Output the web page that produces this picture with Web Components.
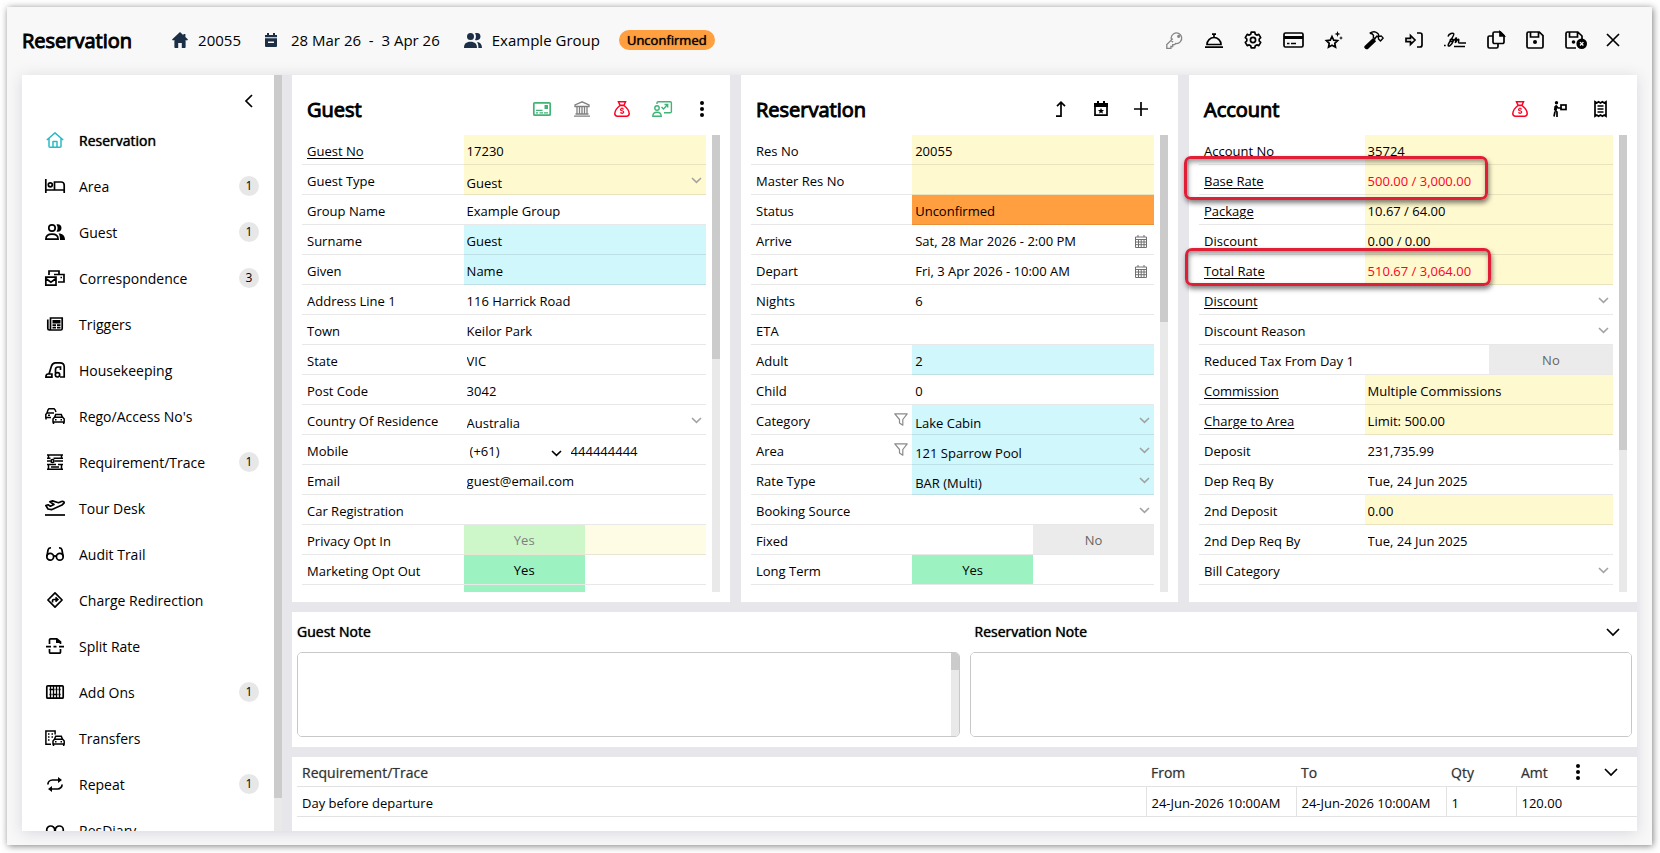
<!DOCTYPE html>
<html lang="en">
<head>
<meta charset="utf-8">
<title>Reservation</title>
<style>
  html, body {
    height: 100%;
  }

  body {
    margin: 0;
    padding: 7px 8px 8px 7px;
    box-sizing: border-box;
    background: #fff;
    color: #000;
    font-family: 'Open Sans', 'Noto Sans', sans-serif;
    font-size: 13px;
    overflow: hidden;
  }
</style>
</head>
<body>
<res-dialog>
  <res-header slot="header"></res-header>

  <side-nav slot="nav">
    <nav-item icon="home" active>Reservation</nav-item>
    <nav-item icon="bed" count="1">Area</nav-item>
    <nav-item icon="users" count="1">Guest</nav-item>
    <nav-item icon="mails" count="3">Correspondence</nav-item>
    <nav-item icon="news">Triggers</nav-item>
    <nav-item icon="vacuum">Housekeeping</nav-item>
    <nav-item icon="cars">Rego/Access No's</nav-item>
    <nav-item icon="trace" count="1">Requirement/Trace</nav-item>
    <nav-item icon="plane">Tour Desk</nav-item>
    <nav-item icon="glasses">Audit Trail</nav-item>
    <nav-item icon="redirect">Charge Redirection</nav-item>
    <nav-item icon="split">Split Rate</nav-item>
    <nav-item icon="abacus" count="1">Add Ons</nav-item>
    <nav-item icon="transfer">Transfers</nav-item>
    <nav-item icon="repeat" count="1">Repeat</nav-item>
    <nav-item icon="diary">ResDiary</nav-item>
  </side-nav>

  <data-panel heading="Guest" icons="license:green bank:grey moneybag:red teacher:green kebab" thumb="49%" class="wide-head">
    <field-row label="Guest No" value="17230" tone="yellow" link></field-row>
    <field-row label="Guest Type" value="Guest" type="select" tone="yellow"></field-row>
    <field-row label="Group Name" value="Example Group"></field-row>
    <field-row label="Surname" value="Guest" tone="cyan"></field-row>
    <field-row label="Given" value="Name" tone="cyan"></field-row>
    <field-row label="Address Line 1" value="116 Harrick Road"></field-row>
    <field-row label="Town" value="Keilor Park"></field-row>
    <field-row label="State" value="VIC"></field-row>
    <field-row label="Post Code" value="3042"></field-row>
    <field-row label="Country Of Residence" value="Australia" type="select"></field-row>
    <field-row label="Mobile" value="444444444" code="(+61)" type="phone"></field-row>
    <field-row label="Email" value="guest@email.com"></field-row>
    <field-row label="Car Registration" value=""></field-row>
    <field-row label="Privacy Opt In" value="Yes" type="toggle" disabled></field-row>
    <field-row label="Marketing Opt Out" value="Yes" type="toggle"></field-row>
    <field-row label="" value="" type="toggle"></field-row>
  </data-panel>

  <data-panel heading="Reservation" icons="turnup calstar plus" thumb="41%">
    <field-row label="Res No" value="20055" tone="yellow"></field-row>
    <field-row label="Master Res No" value="" tone="yellow"></field-row>
    <field-row label="Status" value="Unconfirmed" tone="orange"></field-row>
    <field-row label="Arrive" value="Sat, 28 Mar 2026 - 2:00 PM" type="date"></field-row>
    <field-row label="Depart" value="Fri, 3 Apr 2026 - 10:00 AM" type="date"></field-row>
    <field-row label="Nights" value="6"></field-row>
    <field-row label="ETA" value=""></field-row>
    <field-row label="Adult" value="2" tone="cyan"></field-row>
    <field-row label="Child" value="0"></field-row>
    <field-row label="Category" value="Lake Cabin" type="select" tone="cyan" filter></field-row>
    <field-row label="Area" value="121 Sparrow Pool" type="select" tone="cyan" filter></field-row>
    <field-row label="Rate Type" value="BAR (Multi)" type="select" tone="cyan"></field-row>
    <field-row label="Booking Source" value="" type="select"></field-row>
    <field-row label="Fixed" value="No" type="toggle"></field-row>
    <field-row label="Long Term" value="Yes" type="toggle"></field-row>
  </data-panel>

  <data-panel heading="Account" icons="moneybag:red carry receipt" thumb="69%">
    <field-row label="Account No" value="35724" tone="yellow"></field-row>
    <field-row label="Base Rate" value="500.00 / 3,000.00" tone="yellow" link alert></field-row>
    <field-row label="Package" value="10.67 / 64.00" tone="yellow" link></field-row>
    <field-row label="Discount" value="0.00 / 0.00" tone="yellow"></field-row>
    <field-row label="Total Rate" value="510.67 / 3,064.00" tone="yellow" link alert></field-row>
    <field-row label="Discount" value="" type="select" link></field-row>
    <field-row label="Discount Reason" value="" type="select"></field-row>
    <field-row label="Reduced Tax From Day 1" value="No" type="toggle"></field-row>
    <field-row label="Commission" value="Multiple Commissions" tone="yellow" link></field-row>
    <field-row label="Charge to Area" value="Limit: 500.00" tone="yellow" link></field-row>
    <field-row label="Deposit" value="231,735.99"></field-row>
    <field-row label="Dep Req By" value="Tue, 24 Jun 2025"></field-row>
    <field-row label="2nd Deposit" value="0.00" tone="yellow"></field-row>
    <field-row label="2nd Dep Req By" value="Tue, 24 Jun 2025"></field-row>
    <field-row label="Bill Category" value="" type="select"></field-row>
    <mark-box slot="marks" style="top: 81px; left: -5px; width: 304px; height: 44px"></mark-box>
    <mark-box slot="marks" style="top: 173px; left: -4px; width: 306px; height: 38px"></mark-box>
  </data-panel>

  <res-notes slot="notes"></res-notes>
  <trace-table slot="trace"></trace-table>
</res-dialog>

<script>
// name: [width, height, markup]
const ICONS = {
  homeSolid: [16, 16, '<path fill="currentColor" stroke="none" d="M8 0 0 7.4 1 8.6l1.4-.6v7.2c0 .5.3.8.8.8h3V11h3.600v5h3c.5 0 .8-.3.8-.8V8l1.400.6 1-1.200-2.600-2.400V2h-2v1.200z"/>'],
  calSolid: [12, 14, '<path fill="currentColor" stroke="none" fill-rule="evenodd" d="M2 0h2v2h4V0h2v2h2v2.300H0V2h2zM0 5.300h12V13a1 1 0 0 1-1 1H1a1 1 0 0 1-1-1zM3 8.500v1.600h6V8.500z"/>'],
  usersSolid: [18, 15, '<g fill="currentColor" stroke="none"><circle cx="6.500" cy="3.500" r="3.500"/><path d="M0 15c0-4 2-6.200 6.500-6.200S13 11 13 15zM11 .3c4-1.200 5.500 1 5.500 3.200S15 8 11 6.900c1.300-1.800 1.300-4.800 0-6.600zM13 8.900c3.400.3 5 2.600 5 6.100h-3.600c0-2.700-.2-4.500-1.400-6.100z"/></g>'],
  key: [18, 18, '<path stroke-width="1.300" d="M7 11.300A5.300 5.300 0 1 1 9.700 12.500L8.600 13.700H6.700v1.800H4.900v1.800H.8v-3.800L6.800 7.600"/><circle cx="12.700" cy="5.300" r=".8"/>'],
  bell: [18, 15, '<path d="M2 11.500a7 7 0 0 1 14 0zM0 14.200h18M7 1.200h4M9 1v3"/>'],
  gear: [18, 18, '<path stroke-linejoin="round" d="m7.200 1.200-.5 2-1.500.9-2-.7L1.300 6.600 2.800 8v2l-1.500 1.400 1.900 3.200 2-.7 1.500.9.500 2h3.600l.5-2 1.500-.9 2 .7 1.900-3.200L15.200 10V8l1.500-1.400-1.900-3.200-2 .7-1.500-.9-.5-2z"/><circle cx="9" cy="9" r="2.600"/>'],
  card: [21, 16, '<rect x="1" y="1" width="19" height="14" rx="1.500"/><path stroke-width="3" d="M1 5.500h19"/><path d="M4 11.500h2.500M8 11.500h5"/>'],
  star: [18, 18, '<path d="m7 5.500 1.700 3.600 3.900.5-2.800 2.700.7 3.900L7 14.300l-3.500 1.900.7-3.900-2.800-2.700 3.900-.5z"/><path fill="currentColor" stroke="none" d="m12.500 0 .8 2.200 2.200.8-2.200.8-.8 2.200-.8-2.200L9.500 3l2.200-.8zM16 5l.6 1.400 1.400.6-1.400.6L16 9l-.6-1.400L14 7l1.400-.6z"/>'],
  hammer: [20, 18, '<path fill="currentColor" d="m1.200 15.500 7.800-7.200 1.900 1.900-7.200 7C2.500 18 .5 16.800 1.200 15.500z"/><path stroke-width="1.400" stroke-linejoin="round" d="M5.800 2.300C8.800.2 11.500.5 13.500 2.300l1 1 .2 1.700 1.500.3 1-.4 2 2.200-2.700 2.800-2-2v-1.500L13 5l-2.800 3.300"/><path stroke-width="1.400" d="M5.800 2.300c1.800 0 3 .7 3.700 2l-.2 2 2 2.200"/>'],
  login: [18, 16, '<path d="M1 6.300h4.500V3.500L10 8l-4.500 4.500V9.700H1zM12 1h3a2 2 0 0 1 2 2v10a2 2 0 0 1-2 2h-3"/>'],
  sign: [22, 16, '<path stroke-width="1.500" d="M4 4.500c1-3 5-4 5.800-2.700C10.500 3.200 5 10 4.200 13c-.3 2.300 3.300 1 5.300-4.500C8.500 6 5 7.500 6.500 9.300 8.500 10.500 10.500 8 12.500 5.500l-1.200 5.500c2-4 3.700-4.500 3.500-3s-.8 3 .7 3H22M10 14.500h11M0 13.500h1.700"/>'],
  copy: [18, 18, '<path d="M7.500 1h6L17 4.500V11a1.500 1.500 0 0 1-1.500 1.500h-8A1.500 1.500 0 0 1 6 11V2.500A1.500 1.500 0 0 1 7.500 1z"/><path fill="currentColor" d="M13 1v4h4z"/><path d="M6 5H2.500A1.500 1.500 0 0 0 1 6.500v9A1.500 1.500 0 0 0 2.500 17h7a1.500 1.500 0 0 0 1.500-1.500v-3"/>'],
  save: [18, 18, '<path d="M2.500 1h10.800L17 4.700v10.800a1.500 1.500 0 0 1-1.500 1.500h-13A1.500 1.500 0 0 1 1 15.500v-13A1.500 1.500 0 0 1 2.500 1zM4.500 1v5h8V1"/><circle cx="9" cy="11" r="2" fill="currentColor" stroke="none"/>'],
  saveX: [22, 18, '<path d="M11 17H2.500A1.500 1.500 0 0 1 1 15.500v-13A1.500 1.500 0 0 1 2.500 1h10.300L17 5v3M4.500 1v5h8V1"/><circle cx="8.500" cy="11" r="1.800" fill="currentColor" stroke="none"/><circle cx="16.700" cy="12.800" r="5.300" fill="currentColor" stroke="none"/><path stroke="#fff" stroke-width="1.300" d="m15 11.100 3.400 3.400m0-3.400L15 14.500"/>'],
  close: [12, 12, '<path d="m0 0 12 12M12 0 0 12"/>'],
  license: [18, 14, '<rect x=".8" y=".8" width="16.400" height="12.400" rx="1"/><path d="M3 8.300h6.500M3 10.800h2M6.500 10.800h3.500M11 10.800h4" stroke-width="1.300"/><path fill="currentColor" stroke="none" d="M11.500 3H15v4h-3.500z"/>'],
  bank: [16, 16, '<path stroke-width="1.300" d="M8 .8 1 4v1.500h14V4zM0 15.200h16M1.500 13h13M3 6v6.500M5.500 6v6.500M8 6v6.500M10.500 6v6.500M13 6v6.500"/>'],
  moneybag: [16, 16, '<path stroke-width="1.500" d="M4.500.8h7L10 4.200H6zM6 4.500h4c2.500 2 5.200 5 5.200 8 0 2-1 2.700-2.700 2.700h-9c-1.700 0-2.700-.7-2.700-2.700 0-3 2.700-6 5.200-8z"/><path stroke-width="1.200" d="M9.700 8.200C8.500 7.300 6.500 7.400 6.500 8.700s3.200.8 3.200 2.200-2.200 1.500-3.400.6M8 6.500v1.200m0 4v1.200"/>'],
  teacher: [20, 16, '<g stroke-width="1.400"><path d="M5 3V2A1.200 1.200 0 0 1 6.200.8h12A1.200 1.200 0 0 1 19.400 2v8.500a1.200 1.200 0 0 1-1.200 1.200H12"/><circle cx="5" cy="7" r="2.200"/><path d="M.8 15.200c0-2.700 1.500-4 4.200-4s4.200 1.300 4.200 4zM9.500 6l2 2 4-4.300M12.500 3.500h3.200v3"/></g>'],
  kebab: [4, 16, '<g fill="currentColor" stroke="none"><circle cx="2" cy="2" r="2"/><circle cx="2" cy="8" r="2"/><circle cx="2" cy="14" r="2"/></g>'],
  turnup: [12, 16, '<path d="M1 15.200h5V1.500M2 5.200l4-4 4 4"/>'],
  calstar: [14, 16, '<path d="M1 3v11.200h12V3"/><path stroke="none" fill="currentColor" d="M0 2h3V0h2v2h4V0h2v2h3v4H0zM7 7l.9 1.900 2.100.2-1.600 1.400.5 2.100L7 11.500l-1.900 1.100.5-2.100L4 9.100l2.100-.2z"/>'],
  plus: [14, 14, '<path d="M7 0v14M0 7h14"/>'],
  carry: [14, 16, '<circle cx="3.500" cy="1.700" r="1.700" fill="currentColor" stroke="none"/><path d="M3 4.500 1.800 8.500 4 11v5M2 10.500 1 15.500M3 4.500 5 7h3.500"/><rect x="8" y="4" width="5" height="4.500"/><path stroke-width="2.500" d="M2.700 5v4"/>'],
  receipt: [13, 16, '<path d="M1 .8 2.800 2 4.600.8 6.500 2 8.400.8 10.200 2 12 .8v14.400L10.200 14l-1.800 1.200L6.500 14l-1.900 1.200L2.800 14 1 15.200z"/><path d="M3.500 5h6M3.500 8h6M3.500 11h6"/>'],
  calendar: [12, 13, '<path stroke-width="1" d="M.5 2h11v10.500H.5zM.5 4.500h11M.5 7h11M.5 9.700h11M3.500 4.500v8M6.200 4.500v8M9 4.500v8M3 0v2M9 0v2"/>'],
  filter: [14, 13, '<path stroke-width="1.200" stroke-linejoin="round" d="M.8.8h12.400L8.800 6.500v5.700L5.500 10V6.500z"/>'],
  down: [14, 8, '<path d="m1 1 6 6 6-6"/>'],
  chevron: [11, 6, '<path stroke-width="1.600" d="m1 1 4.500 4.300L10 1"/>'],
  left: [8, 14, '<path d="M7 1 1 7l6 6"/>'],
  home: [18, 16, '<path stroke-width="1.500" stroke-linejoin="round" d="M.8 8 9 .9 17.200 8M3 6.500v7.700a1 1 0 0 0 1 1h10a1 1 0 0 0 1-1V6.500M7 15V9.500h4V15"/>'],
  bed: [20, 14, '<path d="M.8 0v14M.8 11h18.400M19.200 14V6a3 3 0 0 0-3-3H9.500v8"/><circle cx="5.300" cy="5.800" r="2"/>'],
  users: [20, 16, '<circle cx="7" cy="4" r="3.200"/><path d="M.9 15.200c0-3.300 2-5 6.100-5s6.100 1.700 6.100 5z"/><path fill="currentColor" stroke="none" d="M11.500.5c2.800-.8 5 .8 5 3.500s-2.200 4.300-5 3.500c1.500-2 1.500-5 0-7zM13.500 9.600c4.500 0 6.500 2.600 6.500 6.400h-5c0-3-.3-4.700-1.500-6.400z"/>'],
  mails: [20, 16, '<path d="M4 5V1h10v3M9 4.500h10V12h-6M.8 7.200H11v8H.8zM.8 8.500l5.100 3.700L11 8.500M15.500 7.500H17"/>'],
  news: [16, 14, '<path d="M3.500 11.500V1h11.700v10.500a1.500 1.500 0 0 1-1.500 1.500H2.300A1.500 1.500 0 0 1 .8 11.500V2.500M3.500 11.500a1.500 1.500 0 0 1-1.200 1.500M5.500 8.200H9M5.500 10.700H9M10 8.200h3.500M10 10.700h3.500"/><path fill="currentColor" stroke="none" d="M5.500 3h8v3.500h-8z"/>'],
  vacuum: [20, 16, '<path d="M4 12 6.500 4c.8-2.300 2-3.200 4-3.200H15c2.700 0 4.200 1.500 4.200 4V15H15M.9 15.200h6V12H3c-1.300 0-2.100 1.300-2.100 3.200zM10.500 11V7.500C10.500 5.700 11.500 5 13 5h2.500v3"/><circle cx="12.500" cy="12.800" r="2.200"/>'],
  cars: [20, 16, '<path stroke-width="1.500" d="M6 9.500H.8V6.500L2 5l1-3.200.9-1h5.200l1 1L11 4M2 5h7M1 9.500v2M9.500 9.500l1.200-3h5.600l1.200 3M8 14v-3l1.500-1.700h8.200L19.200 11v3zM8.500 14v2M18.700 14v2M10 11.700h1.500M15.500 11.700H17M3 7.300h2"/>'],
  trace: [16, 16, '<path stroke-width="1.500" d="M0 1h16M1.500 1v3.500M14.500 1v3.500M0 4.300h3.500M6.500 4.300H16M0 7h3.500M8 7h8M0 10.500h9M11 10.500h5M1.500 10.500V15M14.500 10.500V15M0 15.200h16M4 13h8"/><circle cx="5.500" cy="7" r="1.500"/>'],
  plane: [20, 16, '<path stroke-linejoin="round" d="M3 9 .9 5.500l2.200-.7 2.300 1.400L9 4.500 4.800 1.800 7.500.9l6 1.800 3-1.200c2-.6 3 .6 2.500 1.700L17 5 6.500 9.700z"/><path d="M0 15h20"/>'],
  glasses: [18, 14, '<circle cx="4.200" cy="9.800" r="3.400"/><circle cx="13.800" cy="9.800" r="3.400"/><path d="M.9 9.500 2 3C2.400 1.300 3.300.8 5 1M17.100 9.500 16 3c-.4-1.700-1.300-2.200-3-2M7.500 9.500c1-.8 2-.8 3 0"/>'],
  redirect: [16, 16, '<path stroke-linejoin="round" d="m8 .9 7.100 7.100L8 15.100.9 8z"/><path d="M5.500 10.500V8.700C5.500 8 6 7.500 6.700 7.500h3.800M8.500 5.300l2.300 2.200-2.300 2.200"/>'],
  split: [18, 16, '<path d="M3.500 6V2A1.100 1.100 0 0 1 4.600.9h6.200L14.500 4v2M3.500 11v3a1.100 1.100 0 0 0 1.100 1.200h8.800a1.100 1.100 0 0 0 1.100-1.200v-3M0 8.700h5M7.500 8.700h3M13 8.700h5"/><path fill="currentColor" stroke="none" d="M10 0v5h5z"/>'],
  abacus: [18, 14, '<rect x=".8" y=".8" width="16.400" height="12.400" rx="1"/><path stroke-width="1.300" d="M4.500 1v12M7.500 1v12M10.500 1v12M13.500 1v12"/><path stroke-width="1.400" d="M3.500 4.500h5M9.500 4.500h2M3.500 9.500h2M6.500 9.500h5M12.500 4.500h2M12.500 9.500h2"/>'],
  transfer: [20, 16, '<path stroke-width="1.500" d="M6 14.200H.9V.9h9.200V4.500M3 4h1.500M6.500 4H8M3 7h1.500M6.500 7H8M3 10h1.500M9.500 9.300l1.200-3h5.600l1.200 3M8 14v-3l1.500-1.700h8.200L19.200 11v3zM8.500 14v2M18.700 14v2M10 11.700h1.500M15.500 11.700H17"/>'],
  repeat: [16, 15, '<path d="M.9 7.500A4.500 4.500 0 0 1 5.400 3H12M15.100 7.500A4.500 4.500 0 0 1 10.600 12H4"/><path fill="currentColor" stroke="none" d="M11 0v6l4-3zM5 9v6l-4-3z"/>'],
  diary: [18, 10, '<circle cx="4.700" cy="5" r="4"/><circle cx="13.300" cy="5" r="4"/>'],
};

const BUTTON_RESET = `
  button {
    display: inline-flex;
    align-items: center;
    justify-content: center;
    padding: 0;
    border: 0;
    background: none;
    color: inherit;
    font: inherit;
    cursor: pointer;
  }
`;

class UiIcon extends HTMLElement {
  constructor() {
    super();
    this.attachShadow({ mode: 'open' });
  }

  connectedCallback() {
    const [w, h, markup] = ICONS[this.getAttribute('name')];
    this.shadowRoot.innerHTML = `
      <style>
        :host { display: inline-flex; }
        svg { display: block; overflow: visible; }
      </style>
      <svg width="${w}" height="${h}" viewBox="0 0 ${w} ${h}" fill="none" stroke="currentColor" stroke-width="1.7" aria-hidden="true">${markup}</svg>
    `;
  }
}

class ScrollRail extends HTMLElement {
  constructor() {
    super();
    this.attachShadow({ mode: 'open' });
  }

  connectedCallback() {
    this.shadowRoot.innerHTML = `
      <style>
        :host { display: block; flex: none; width: 8px; background: #e9e9ea; }
        div { height: ${this.getAttribute('thumb')}; background: #cbcbcb; }
      </style>
      <div></div>
    `;
  }
}

class ResDialog extends HTMLElement {
  constructor() {
    super();
    this.attachShadow({ mode: 'open' }).innerHTML = `
      <style>
        :host {
          display: flex;
          flex-direction: column;
          height: 100%;
          box-sizing: border-box;
          padding: 0 15px 14px;
          background: #f8f8f8;
          box-shadow: 1px 1px 7px rgba(0, 0, 0, .5);
        }
        main {
          flex: 1;
          min-height: 0;
          display: grid;
          grid-template-columns: 260px 1fr;
          gap: 10px;
          background: #e7e6eb;
          box-shadow: 0 2px 14px rgba(70, 60, 100, .18);
        }
        .content {
          display: grid;
          grid-template-rows: 1fr auto auto;
          gap: 10px;
          min-width: 0;
          min-height: 0;
        }
        .panels {
          display: grid;
          grid-template-columns: 438fr 437fr 448fr;
          gap: 11px;
          min-height: 0;
        }
        slot[name='nav'] { display: contents; }
      </style>
      <slot name="header"></slot>
      <main>
        <slot name="nav"></slot>
        <div class="content">
          <div class="panels"><slot></slot></div>
          <slot name="notes"></slot>
          <slot name="trace"></slot>
        </div>
      </main>
    `;
  }
}

class ResHeader extends HTMLElement {
  constructor() {
    super();
    const tools = ['key', 'bell', 'gear', 'card', 'star', 'hammer', 'login', 'sign', 'copy', 'save', 'saveX'];
    this.attachShadow({ mode: 'open' }).innerHTML = `
      <style>
        ${BUTTON_RESET}
        :host { display: flex; align-items: center; height: 68px; box-sizing: border-box; padding: 0 18px 2px 0; font-size: 15px; }
        h1 { margin: 0 40px 0 0; font-size: 20px; font-weight: 400; -webkit-text-stroke: 1px; }
        .facts { display: flex; align-items: center; gap: 24px; }
        .fact { display: flex; align-items: center; gap: 10px; }
        .dates { gap: 14px; }
        .dates span { white-space: pre; }
        .fact ui-icon { color: #1c2f47; }
        .status { margin-left: -5px; padding: 0 8px; border-radius: 10px; background: #ff9f3f; font-size: 13px; line-height: 20px; text-shadow: 0 0 1px; }
        .tools { display: flex; align-items: center; gap: 21px; margin: 0 20px 0 auto; }
        .key { color: #858585; }
      </style>
      <h1>Reservation</h1>
      <div class="facts">
        <div class="fact"><ui-icon name="homeSolid"></ui-icon>20055</div>
        <div class="fact dates"><ui-icon name="calSolid"></ui-icon><span>28 Mar 26  -  3 Apr 26</span></div>
        <div class="fact"><ui-icon name="usersSolid"></ui-icon>Example Group</div>
        <div class="status">Unconfirmed</div>
      </div>
      <div class="tools">
        ${tools.map((t) => `<button type="button" class="${t}" aria-label="${t}"><ui-icon name="${t}"></ui-icon></button>`).join('')}
      </div>
      <button type="button" aria-label="close"><ui-icon name="close"></ui-icon></button>
    `;
  }
}

class SideNav extends HTMLElement {
  constructor() {
    super();
    this.attachShadow({ mode: 'open' }).innerHTML = `
      <style>
        ${BUTTON_RESET}
        :host { display: flex; min-height: 0; background: #fff; }
        nav { flex: 1; overflow: hidden; }
        .top { display: flex; justify-content: flex-end; height: 42px; padding: 10px 21px 0 0; box-sizing: border-box; }
      </style>
      <nav>
        <div class="top"><button type="button" aria-label="collapse"><ui-icon name="left"></ui-icon></button></div>
        <slot></slot>
      </nav>
      <scroll-rail thumb="calc(100% - 33px)"></scroll-rail>
    `;
  }
}

class NavItem extends HTMLElement {
  constructor() {
    super();
    this.attachShadow({ mode: 'open' });
  }

  connectedCallback() {
    const count = this.getAttribute('count');
    this.shadowRoot.innerHTML = `
      <style>
        :host { display: block; font-size: 14px; }
        :host([active]) .text { text-shadow: 0 0 1px; }
        :host([active]) ui-icon { color: #2abcc3; }
        a { display: flex; align-items: center; height: 46px; padding: 0 15px 0 22px; color: inherit; text-decoration: none; }
        .icon { display: flex; justify-content: center; width: 22px; margin-right: 13px; }
        .text { flex: 1; }
        .count { width: 20px; border-radius: 50%; background: #e7e7e7; font-size: 12px; line-height: 20px; text-align: center; }
      </style>
      <a href="#">
        <span class="icon"><ui-icon name="${this.getAttribute('icon')}"></ui-icon></span>
        <span class="text"><slot></slot></span>
        ${count ? `<span class="count">${count}</span>` : ''}
      </a>
    `;
  }
}

class DataPanel extends HTMLElement {
  constructor() {
    super();
    this.attachShadow({ mode: 'open' });
  }

  connectedCallback() {
    const icons = this.getAttribute('icons').split(' ').map((item) => {
      const [name, color = ''] = item.split(':');
      return `<button type="button" class="${color}" aria-label="${name}"><ui-icon name="${name}"></ui-icon></button>`;
    });
    this.shadowRoot.innerHTML = `
      <style>
        ${BUTTON_RESET}
        :host { display: flex; flex-direction: column; position: relative; min-width: 0; min-height: 0; background: #fff; }
        header { display: flex; align-items: center; height: 60px; padding: 8px 25px 0 15px; box-sizing: border-box; }
        :host(.wide-head) header { padding-right: 16px; }
        h2 { flex: 1; margin: 0; font-size: 20px; font-weight: 400; -webkit-text-stroke: 1px; }
        .icons { display: flex; gap: 16px; }
        .icons button { width: 24px; }
        .green { color: #3fb476; }
        .grey { color: #808080; }
        .red { color: #ff0022; }
        .body { flex: 1; display: flex; gap: 6px; min-height: 0; padding: 0 10px 10px; }
        .rows { flex: 1; overflow: hidden; }
      </style>
      <header>
        <h2>${this.getAttribute('heading')}</h2>
        <div class="icons">${icons.join('')}</div>
      </header>
      <div class="body">
        <div class="rows"><slot></slot></div>
        <scroll-rail thumb="${this.getAttribute('thumb')}"></scroll-rail>
      </div>
      <slot name="marks"></slot>
    `;
  }
}

class FieldRow extends HTMLElement {
  constructor() {
    super();
    this.attachShadow({ mode: 'open' });
  }

  get control() {
    const value = this.getAttribute('value');
    switch (this.getAttribute('type')) {
      case 'select':
        return `<select id="field"><option>${value}</option></select><ui-icon class="chevron" name="chevron"></ui-icon>`;
      case 'date':
        return `<input id="field" value="${value}"><button type="button" aria-label="pick date"><ui-icon name="calendar"></ui-icon></button>`;
      case 'phone':
        return `<span class="code"><select aria-label="country code"><option>${this.getAttribute('code')}</option></select><ui-icon class="chevron" name="chevron"></ui-icon></span><input id="field" value="${value}">`;
      case 'toggle':
        return `<button type="button" id="field" class="toggle ${value === 'No' ? 'no' : 'yes'}">${value}</button>`;
      default:
        return `<input id="field" value="${value}">`;
    }
  }

  connectedCallback() {
    const label = this.getAttribute('label');
    this.shadowRoot.innerHTML = `
      <style>
        ${BUTTON_RESET}
        :host { display: grid; grid-template-columns: 2fr 3fr; height: 30px; }
        .label, .value {
          display: flex;
          align-items: center;
          min-width: 0;
          box-sizing: border-box;
          border-bottom: 1px solid rgba(0, 0, 0, .09);
        }
        .label { justify-content: space-between; padding: 3px 4px 0 5px; white-space: nowrap; }
        .label a { color: inherit; text-underline-offset: 2px; }
        .label ui-icon { margin-bottom: 3px; color: #8a8a8a; }
        .value { position: relative; }
        input, select {
          flex: 1;
          width: 100%;
          min-width: 0;
          height: 29px;
          box-sizing: border-box;
          margin: 0;
          padding: 3px 3px 0;
          border: 0;
          border-radius: 0;
          outline: 0;
          appearance: none;
          background: none;
          color: inherit;
          font: inherit;
        }
        select { padding-top: 6px; }
        .chevron { position: absolute; right: 4px; top: 12px; color: #a3a3a3; }
        .value > button:not(.toggle) { margin-right: 7px; padding-top: 3px; color: #707070; }
        .code { position: relative; display: flex; flex: none; width: 104px; }
        .code select { padding: 3px 6px 0; }
        .code .chevron { right: 6px; top: 15px; color: #000; }
        .toggle { width: 50%; height: 29px; }
        .yes { background: #9cf2c0; }
        .no { margin-left: auto; background: #ebebeb; color: #666; }
        :host([tone='yellow']) .value { background: #fff9d0; }
        :host([tone='cyan']) .value { background: #cff7fc; }
        :host([tone='orange']) .value { background: #ff9f3f; }
        :host([alert]) .value { color: #ff0022; }
        :host([disabled]) .value { background: #fffce6; }
        :host([disabled]) .toggle { background: #cdf7c8; color: #808080; }
      </style>
      <div class="label">
        ${this.hasAttribute('link') ? `<label for="field"><a href="#">${label}</a></label>` : `<label for="field">${label}</label>`}
        ${this.hasAttribute('filter') ? '<ui-icon name="filter"></ui-icon>' : ''}
      </div>
      <div class="value">${this.control}</div>
    `;
  }
}

class MarkBox extends HTMLElement {
  constructor() {
    super();
    this.attachShadow({ mode: 'open' }).innerHTML = `
      <style>
        :host {
          position: absolute;
          box-sizing: border-box;
          border: 3px solid #e01f37;
          border-radius: 7px;
          box-shadow: 1px 3px 5px rgba(0, 0, 0, .5), inset 1px 3px 5px rgba(0, 0, 0, .4);
          pointer-events: none;
        }
      </style>
    `;
  }
}

class ResNotes extends HTMLElement {
  constructor() {
    super();
    this.attachShadow({ mode: 'open' }).innerHTML = `
      <style>
        ${BUTTON_RESET}
        :host { display: grid; grid-template-columns: 1fr 1fr; gap: 10px; padding: 0 5px 10px; background: #fff; }
        .head { display: flex; align-items: center; justify-content: space-between; height: 40px; font-size: 14px; text-shadow: 0 0 1px; }
        .inset { padding: 0 12px 0 5px; }
        .frame { display: flex; height: 85px; box-sizing: border-box; border: 1px solid #c8c8c8; border-radius: 5px; overflow: hidden; }
        textarea { flex: 1; border: 0; outline: 0; resize: none; font: inherit; overflow: hidden; }
      </style>
      <section>
        <div class="head"><label for="guest">Guest Note</label></div>
        <div class="frame"><textarea id="guest"></textarea><scroll-rail thumb="17px"></scroll-rail></div>
      </section>
      <section>
        <div class="head inset">
          <label for="res">Reservation Note</label>
          <button type="button" aria-label="collapse notes"><ui-icon name="down"></ui-icon></button>
        </div>
        <div class="frame"><textarea id="res"></textarea></div>
      </section>
    `;
  }
}

class TraceTable extends HTMLElement {
  constructor() {
    super();
    this.attachShadow({ mode: 'open' }).innerHTML = `
      <style>
        ${BUTTON_RESET}
        :host { display: block; padding: 0 0 14px 5px; background: #fff; }
        table { width: 100%; border-collapse: collapse; table-layout: fixed; text-align: left; }
        th, td { height: 30px; padding: 2px 0 0 5px; box-sizing: border-box; border-bottom: 1px solid #e2e2e2; white-space: nowrap; }
        th { color: #333; font-size: 14px; font-weight: 400; text-shadow: 0 0 1px rgba(0, 0, 0, .4); }
        td + td { border-left: 1px solid #e2e2e2; }
        .date { width: 150px; }
        .qty { width: 70px; }
        .amt { width: 50px; }
        .more { width: 71px; }
        .actions { display: flex; align-items: center; gap: 24px; padding-left: 5px; color: #000; }
      </style>
      <table>
        <thead>
          <tr>
            <th>Requirement/Trace</th>
            <th class="date">From</th>
            <th class="date">To</th>
            <th class="qty">Qty</th>
            <th class="amt">Amt</th>
            <th class="more">
              <div class="actions">
                <button type="button" aria-label="more"><ui-icon name="kebab"></ui-icon></button>
                <button type="button" aria-label="collapse"><ui-icon name="down"></ui-icon></button>
              </div>
            </th>
          </tr>
        </thead>
        <tbody>
          <tr>
            <td>Day before departure</td>
            <td>24-Jun-2026 10:00AM</td>
            <td>24-Jun-2026 10:00AM</td>
            <td>1</td>
            <td colspan="2">120.00</td>
          </tr>
        </tbody>
      </table>
    `;
  }
}

customElements.define('ui-icon', UiIcon);
customElements.define('scroll-rail', ScrollRail);
customElements.define('res-dialog', ResDialog);
customElements.define('res-header', ResHeader);
customElements.define('side-nav', SideNav);
customElements.define('nav-item', NavItem);
customElements.define('data-panel', DataPanel);
customElements.define('field-row', FieldRow);
customElements.define('mark-box', MarkBox);
customElements.define('res-notes', ResNotes);
customElements.define('trace-table', TraceTable);
</script>
</body>
</html>
